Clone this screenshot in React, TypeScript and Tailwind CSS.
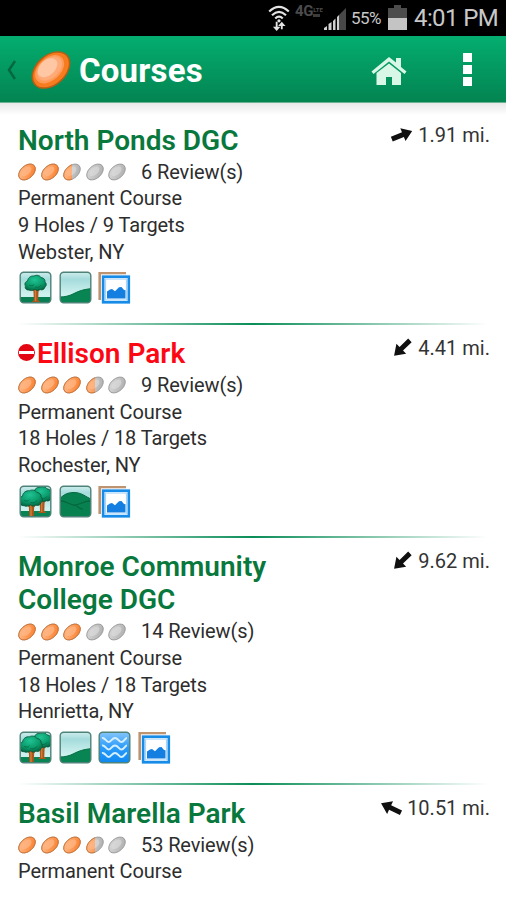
import React from 'react';

type Feature = 'tree' | 'trees' | 'slope' | 'hills' | 'water' | 'photos';

interface Course {
  title: string[];
  closed?: boolean;
  rating: number;
  reviews: number;
  holes?: string;
  city?: string;
  features: Feature[];
  distance: string;
  angle: number;
}

const courses: Course[] = [
  { title: ['North Ponds DGC'], rating: 2.5, reviews: 6, holes: '9 Holes / 9 Targets', city: 'Webster, NY', features: ['tree', 'slope', 'photos'], distance: '1.91 mi.', angle: -22 },
  { title: ['Ellison Park'], closed: true, rating: 3.5, reviews: 9, holes: '18 Holes / 18 Targets', city: 'Rochester, NY', features: ['trees', 'hills', 'photos'], distance: '4.41 mi.', angle: 136 },
  { title: ['Monroe Community', 'College DGC'], rating: 3, reviews: 14, holes: '18 Holes / 18 Targets', city: 'Henrietta, NY', features: ['trees', 'slope', 'water', 'photos'], distance: '9.62 mi.', angle: 136 },
  { title: ['Basil Marella Park'], rating: 3.5, reviews: 53, features: [], distance: '10.51 mi.', angle: 205 },
];

// Gradients shared by every icon on the page
const Defs = () => (
  <svg className="absolute size-0" aria-hidden="true">
    <defs>
      <linearGradient id="sky" x1="0" y1="0" x2="0" y2="1">
        <stop offset="0" stopColor="#d5efef" />
        <stop offset="0.25" stopColor="#a5dcdc" />
        <stop offset="0.7" stopColor="#cdf1ee" />
      </linearGradient>
      <linearGradient id="lake" x1="0" y1="0" x2="0" y2="1">
        <stop offset="0" stopColor="#8cc8fb" />
        <stop offset="0.5" stopColor="#2a9bfa" />
        <stop offset="1" stopColor="#0b86ef" />
      </linearGradient>
      <radialGradient id="leaf" cx="0.45" cy="0.3" r="0.7">
        <stop offset="0" stopColor="#20c394" />
        <stop offset="0.6" stopColor="#0b9c6c" />
        <stop offset="1" stopColor="#056b45" />
      </radialGradient>
      <linearGradient id="discOn" x1="0" y1="0" x2="1" y2="1">
        <stop offset="0" stopColor="#ffc59a" />
        <stop offset="1" stopColor="#fb7720" />
      </linearGradient>
      <linearGradient id="discOff" x1="0" y1="0" x2="1" y2="1">
        <stop offset="0" stopColor="#dedede" />
        <stop offset="1" stopColor="#aaa" />
      </linearGradient>
      <clipPath id="tile"><rect x="1.2" y="1.2" width="30.6" height="30.6" rx="3.5" /></clipPath>
      <clipPath id="leftHalf"><rect x="0" y="0" width="9" height="18" /></clipPath>
    </defs>
  </svg>
);

const Disc = ({ fill }: { fill: number }) => (
  <svg className="h-[18px] w-[18px] shrink-0" viewBox="0 0 18 18">
    <g transform="rotate(-42 9 9)">
      <ellipse cx="9" cy="9" rx="9.6" ry="6.3" fill="url(#discOff)" stroke="#9a9a9a" strokeWidth="0.9" />
      <ellipse cx="9" cy="8.2" rx="6" ry="3.5" fill="#ddd" opacity="0.6" />
    </g>
    {fill > 0 && (
      <g clipPath={fill < 1 ? 'url(#leftHalf)' : undefined}>
        <g transform="rotate(-42 9 9)">
          <ellipse cx="9" cy="9" rx="9.6" ry="6.3" fill="url(#discOn)" stroke="#cf7434" strokeWidth="0.9" />
          <ellipse cx="9" cy="8.2" rx="6" ry="3.5" fill="#ffb888" opacity="0.7" />
        </g>
      </g>
    )}
  </svg>
);

const Tree = () => (
  <>
    <path d="M11.5 17l3 3.5.3 8.5-2 2h8.4l-2-2 .3-8.5 3-3.5z" fill="#a8561c" />
    <path d="M16.5 19v11" stroke="#cf7a35" strokeWidth="1.5" />
    <path d="M10 19c-3 .3-4.500-2-3.500-4-1.500-2 0-4.500 2-5C9 6.500 12 4.500 15 5c2.500-1.500 6-.5 7 1.500 3 .3 4.500 2.500 4 4.500 2 1.500 1.500 4 0 5-.5 2.500-3 3.500-5 2.500-2 1.500-4 1-5-.3-2 1.500-4.500 1.800-6 .8z" fill="url(#leaf)" stroke="#075a3b" strokeWidth="0.8" />
    <path d="M10 14c2 1 4 1 5-.5m1 2.500c3 1 5 0 6-2" fill="none" stroke="#067049" strokeWidth="0.9" />
  </>
);

const FeatureIcon = ({ name }: { name: Feature }) => {
  if (name === 'photos') {
    return (
      <svg className="size-[33px]" viewBox="0 0 33 33">
        <path d="M1.7 29V2.2H28" fill="none" stroke="#bd946f" strokeWidth="2.6" />
        <rect x="3" y="3.500" width="29" height="29" fill="#e9f5ff" />
        <rect x="5.2" y="5.7" width="25.600" height="25.600" fill="#fff" stroke="#168be8" strokeWidth="2.6" />
        <rect x="7.500" y="8" width="21" height="21" fill="none" stroke="#a9d4f8" strokeWidth="1.200" />
        <path d="M9 27.500v-7l3-2 2-.4 3 2.200 4-4 2.500-.2 2.500 2.800 1.500.4v8.200z" fill="#147fe0" />
      </svg>
    );
  }
  return (
    <svg className="size-[33px]" viewBox="0 0 33 33">
      <g clipPath="url(#tile)">
        <rect width="33" height="33" fill={name === 'water' ? 'url(#lake)' : 'url(#sky)'} />
        {name === 'tree' && (
          <>
            <rect y="26" width="33" height="7" fill="#087e52" />
            <Tree />
          </>
        )}
        {name === 'trees' && (
          <>
            <rect y="26" width="33" height="7" fill="#078354" />
            <g transform="translate(6.5 -2.5) scale(.98)"><Tree /></g>
            <g transform="translate(-5.5 0.5) scale(1.06)"><Tree /></g>
          </>
        )}
        {name === 'slope' && <path d="M0 26c6 0 10-1 15-3.500S24 18.500 33 17.500v16H0z" fill="#088553" stroke="#087246" />}
        {name === 'hills' && (
          <>
            <path d="M0 14c4-3 6-6 14-6.500S27 12 33 14.500V33H0z" fill="#07814f" stroke="#066b40" />
            <path d="M0 16c6-1 11 4 15 4s4 4 9 4M14 20.500c7-.5 11-5 19-4.500" fill="none" stroke="#07643d" strokeWidth="1.2" />
          </>
        )}
        {name === 'water' && (
          <g fill="none" stroke="#d5efff" strokeWidth="2">
            <path d="M4 7c3-1 4 4 6.500 4S14 7 17 7s4 4 6.500 4S27 7 29 7" />
            <path d="M4 14.500c3-1 4 4 6.500 4s3.500-4 6.500-4 4 4 6.500 4 3.500-4 5.500-4" />
            <path d="M4 22c3-1 4 4 6.500 4s3.500-4 6.500-4 4 4 6.500 4 3.500-4 5.500-4" />
          </g>
        )}
      </g>
      <rect x="1.2" y="1.2" width="30.6" height="30.6" rx="3.5" fill="none" stroke="#4f8278" strokeWidth="1.4" />
    </svg>
  );
};

const StatusBar = () => (
  <div className="flex h-[36px] shrink-0 items-center bg-black pl-[267px] text-[#c8c8c8]">
    <svg className="h-[28px] w-[24px] shrink-0" viewBox="0 0 24 30" fill="none" stroke="#e4e4e4">
      <path d="M1.500 8Q12 -2 22.500 8M4.500 12q7.500-7 15 0M8 15.500q4-4 8 0" strokeWidth="2.3" />
      <circle cx="12" cy="18" r="1.7" fill="#e4e4e4" stroke="none" />
      <path d="M9.500 19v7M15 27v-6" strokeWidth="2" />
      <path d="M5.500 24.500h8l-4 4.500zM11 23.500h8l-4-4.500z" fill="#e4e4e4" stroke="none" />
    </svg>
    <div className="-mt-[13px] ml-[4px] flex w-[28px] items-center font-bold text-[#4b4b4b]">
      <span className="text-[15px] leading-none tracking-[-0.3px]">4G</span>
      <span className="flex flex-col text-[6px] leading-[6px]">
        <span>LTE</span>
        <span className="mt-[1px] h-[3px] w-[7px] bg-[#3c3c3c]" />
      </span>
    </div>
    <svg className="mt-[2px] h-[24px] w-[24px] shrink-0" viewBox="0 0 24 24">
      <path d="M16 8l7-7v22h-7z" fill="#484848" />
      <path d="M1 23v-2l3-2v4zM5.500 23v-6l3-2v8zM10 23v-9l2.500-2.500V23zM14 23V10l2-2v15z" fill="#d0d0d0" />
    </svg>
    <span className="mt-[1px] ml-[4px] w-[33px] text-[17px] tracking-[-0.5px]">55%</span>
    <svg className="-mt-[1px] ml-[4px] h-[27px] w-[19px] shrink-0" viewBox="0 0 19 27">
      <path d="M6 1h7v3h6v10H0V4h6z" fill="#4c4c4c" />
      <path d="M0 14h19v12H0z" fill="#c4c4c4" />
    </svg>
    <span className="ml-[7px] text-[24px] tracking-[-0.6px] whitespace-nowrap">4:01 PM</span>
  </div>
);

const Header = () => (
  <header className="flex h-[67px] shrink-0 items-center border-b border-[#68b28f] bg-gradient-to-b from-[#04ae70] to-[#038451] pt-[1px] text-white">
    <svg className="ml-[7px] h-[20px] w-[9px]" viewBox="0 0 9 20">
      <path d="M8 1L2 10l6 9" fill="none" stroke="#04673f" strokeWidth="2.5" />
    </svg>
    <svg className="ml-[15px] size-[40px]" viewBox="0 0 40 40">
      <g transform="rotate(-43 20 20)">
        <ellipse cx="20" cy="20" rx="21.5" ry="14.5" fill="#f77b1f" stroke="#ba5c14" strokeWidth="1.5" />
        <ellipse cx="19.5" cy="18.5" rx="17" ry="11" fill="#ff9c59" />
        <ellipse cx="20" cy="18" rx="14.5" ry="9.5" fill="#ffaa77" />
        <ellipse cx="19" cy="16" rx="11.5" ry="7.5" fill="#ffc7a4" />
      </g>
    </svg>
    <h1 className="mt-[3px] ml-[8px] text-[33px] font-bold tracking-[0.2px]">Courses</h1>
    <svg className="mt-[4px] ml-auto h-[30px] w-[36px]" viewBox="0 0 36 30" fill="#d9f7e7">
      <path d="M18 0l7 5.500V1h5v9l5.500 4.500-2 2.500L18 4.500 2.500 17l-2-2.500z" />
      <path d="M18 6.500l12 9.500v12H21v-8h-6v8H5.500V16z" />
    </svg>
    <div className="mr-[34px] ml-[56px] flex flex-col gap-[3px]">
      <span className="size-[9px] bg-white" />
      <span className="size-[9px] bg-white" />
      <span className="size-[9px] bg-white" />
    </div>
  </header>
);

const CourseItem = ({ course }: { course: Course }) => (
  <article className="pl-[18px]">
    <div className="flex justify-between pr-[16px]">
      <h2 className={`flex text-[28px] leading-[33px] font-semibold ${course.closed ? 'text-[#fb0814]' : 'text-[#08783d]'}`}>
        {course.closed && (
          <svg className="mt-[7px] mr-[2px] size-[17px]" viewBox="0 0 17 17">
            <circle cx="8.5" cy="8.5" r="8.5" fill="#e30613" />
            <path d="M1 7h15v3H1z" fill="#fff" />
          </svg>
        )}
        <span>{course.title.map((line) => <span key={line} className="block whitespace-nowrap">{line}</span>)}</span>
      </h2>
      <div className="flex h-[22px] items-center text-[20px] text-[#333]">
        <svg className="mr-[4px] size-[24px]" viewBox="0 0 24 24">
          <path d="M1 9.500h12V5l10 7-10 7v-4.500H1z" transform={`rotate(${course.angle} 12 12)`} fill="#101010" />
        </svg>
        {course.distance}
      </div>
    </div>
    <div className="pt-[2px] text-[20px] leading-[26.7px] tracking-[-0.1px] text-[#2d2d2d]">
      <div className="flex items-center">
        <div className="flex w-[123px] gap-[4.6px]">
          {[0, 1, 2, 3, 4].map((i) => <Disc key={i} fill={course.rating - i} />)}
        </div>
        {course.reviews} Review(s)
      </div>
      <div>Permanent Course</div>
      {course.holes && <div>{course.holes}</div>}
      {course.city && <div>{course.city}</div>}
    </div>
    {course.features.length > 0 && (
      <>
        <div className="mt-[6px] ml-[1px] flex gap-[6.5px]">
          {course.features.map((f) => <FeatureIcon key={f} name={f} />)}
        </div>
        <div className="mt-[18.5px] mr-[18px] mb-[12.1px] h-[2px] bg-gradient-to-r from-transparent via-[#0a8d58] to-transparent" />
      </>
    )}
  </article>
);

export default function App() {
  return (
    <div className="relative flex h-[900px] w-[506px] flex-col overflow-hidden bg-white font-['Roboto',sans-serif]">
      <Defs />
      <StatusBar />
      <Header />
      <div className="h-[12px] shrink-0 bg-gradient-to-b from-[#e8e8e8] to-white" />
      <main className="pt-[8.5px]">
        {courses.map((course) => <CourseItem key={course.distance} course={course} />)}
      </main>
    </div>
  );
}
